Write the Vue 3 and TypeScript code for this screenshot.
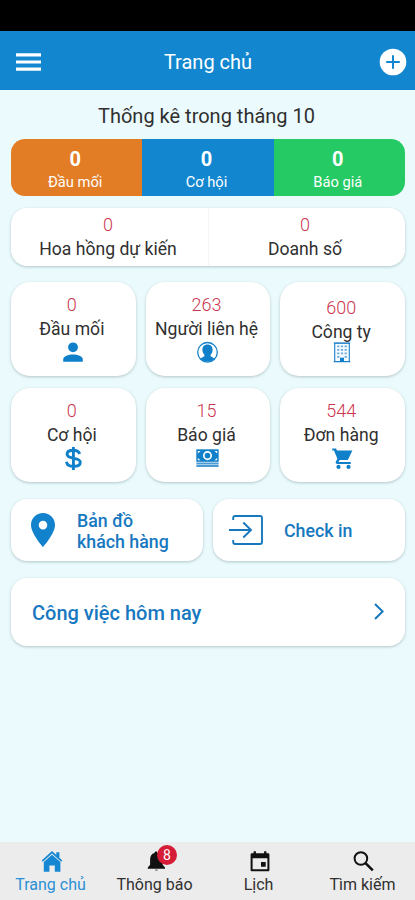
<script setup lang="ts">
interface Stat {
  value: number
  label: string
  icon?: string
  tone?: string
}

const summary: Stat[] = [
  { value: 0, label: 'Đầu mối', tone: 'orange' },
  { value: 0, label: 'Cơ hội', tone: 'blue' },
  { value: 0, label: 'Báo giá', tone: 'green' },
]

const revenue: Stat[] = [
  { value: 0, label: 'Hoa hồng dự kiến' },
  { value: 0, label: 'Doanh số' },
]

const tiles: Stat[] = [
  { value: 0, label: 'Đầu mối', icon: 'person' },
  { value: 263, label: 'Người liên hệ', icon: 'contact' },
  { value: 600, label: 'Công ty', icon: 'building' },
  { value: 0, label: 'Cơ hội', icon: 'dollar' },
  { value: 15, label: 'Báo giá', icon: 'cash' },
  { value: 544, label: 'Đơn hàng', icon: 'cart' },
]
</script>

<template>
  <div class="screen">
    <div class="status"></div>
    <header class="header">
      <svg class="menu" viewBox="0 0 25 18"><path d="M0 1.8h25M0 9h25M0 16.2h25" stroke="#fff" stroke-width="3.2" /></svg>
      <h1>Trang chủ</h1>
      <svg class="add" viewBox="0 0 28 28"><circle cx="14" cy="14" r="13.3" fill="#fff" /><path d="M14 7.2v13.6M7.2 14h13.6" stroke="#1287d0" stroke-width="2" /></svg>
    </header>

    <main>
      <h2><span>Thống kê trong tháng 10</span></h2>

      <section class="summary">
        <div v-for="s in summary" :key="s.label" :class="['sum', s.tone]">
          <b>{{ s.value }}</b>
          <span>{{ s.label }}</span>
        </div>
      </section>

      <section class="revenue card">
        <div v-for="s in revenue" :key="s.label" class="rev">
          <span class="num">{{ s.value }}</span>
          <span class="label">{{ s.label }}</span>
        </div>
      </section>

      <section class="tiles">
        <div v-for="t in tiles" :key="t.label" :class="['tile', 'card', t.icon]">
          <span class="num">{{ t.value }}</span>
          <span class="label">{{ t.label }}</span>
          <svg v-if="t.icon === 'person'" viewBox="0 0 24 24"><circle cx="13" cy="7.3" r="4.9" fill="#1180cb" /><path d="M3.2 21.7v-2.3c0-3.2 5.2-4.8 9.8-4.8s9.8 1.6 9.8 4.8v2.3z" fill="#1180cb" /></svg>
          <svg v-else-if="t.icon === 'contact'" viewBox="0 0 24 24"><circle cx="13.5" cy="12.3" r="9.8" fill="#fff" stroke="#1180cb" stroke-width="1.3" /><path d="M13.5 4.400c3.400 0 5.100 2.200 5.100 5.400 0 2.200-.8 3.900-2 5v1.500l4 2.200A9.700 9.700 0 0 1 6.400 18.500l4-2.200v-1.500c-1.200-1.100-2-2.800-2-5 0-3.200 1.700-5.400 5.100-5.400z" fill="#1180cb" /></svg>
          <svg v-else-if="t.icon === 'building'" viewBox="0 0 24 24"><path d="M5.700 3.200h14.600v18.300H5.700z" fill="#f6fbff" stroke="#1b7fca" stroke-width="1.100" /><path d="M4.700 3h16.600M4.700 21.700h16.600" stroke="#1b7fca" stroke-width="1.200" /><path d="M8.200 6.300h2.200m1.500 0h2.200m1.500 0h2.200M8.200 9.800h2.200m1.500 0h2.200m1.500 0h2.200M8.200 13.300h2.200m1.500 0h2.200m1.500 0h2.200M8.200 16.800h2.200m5.200 0h2.200" stroke="#6aabdd" stroke-width="1.700" /><path d="M11 21.500v-3.800h4v3.800z" fill="#1180cb" /></svg>
          <svg v-else-if="t.icon === 'dollar'" viewBox="0 0 24 24"><path d="M19.700 8c-.7-2.400-3-3.700-6.500-3.700-3.700 0-6.100 1.500-6.100 4 0 5.600 13.200 2.500 13.200 7.900 0 2.700-2.700 4.200-6.700 4.200-4.100 0-6.600-1.600-7.200-4.700M13.400.9V24" fill="none" stroke="#1180cb" stroke-width="2.900" /></svg>
          <svg v-else-if="t.icon === 'cash'" viewBox="0 0 24 24"><path d="M2.300 3.300h22.400v12.500H2.300z" fill="#1180cb" /><path d="M3.800 5v2.400L6.500 5zM3.800 14.300v-2.400l2.700 2.400zM23.200 5v2.400L20.500 5zM23.200 14.300v-2.400l-2.700 2.400z" fill="#fff" /><circle cx="13.500" cy="9.600" r="3.700" fill="#1180cb" stroke="#fff" stroke-width="1.700" /><path d="M2.400 17.500h22.200M2.400 20h22.200" stroke="#4b9ad3" stroke-width="1.800" /></svg>
          <svg v-else viewBox="0 0 24 24"><path d="M3.200 2.400h3.800l1 2.200h15.400l-4.200 8.600c-.3.600-.8.900-1.500.9h-7.100l-1.100 2h12.300v2H8.500c-1.600 0-2.300-1.300-1.600-2.600l1.500-2.700-3.400-8.400H3.200z" fill="#1180cb" /><circle cx="9.500" cy="20.900" r="2.100" fill="#1180cb" /><circle cx="19.500" cy="20.900" r="2.100" fill="#1180cb" /></svg>
        </div>
      </section>

      <section class="actions">
        <div class="action card map">
          <svg class="pin" viewBox="0 0 24 34"><path fill-rule="evenodd" d="M12 0C5.300 0 0 5.200 0 11.900 0 20.500 12 34 12 34s12-13.500 12-22.100C24 5.200 18.700 0 12 0zm0 7.800a4.300 4.300 0 1 1 0 8.600 4.300 4.300 0 0 1 0-8.600z" fill="#1282cc" /></svg>
          <span>Bản đồ<br />khách hàng</span>
        </div>
        <div class="action card check">
          <svg class="enter" viewBox="0 0 34 30"><path d="M4.200 5V3q0-2 2-2H31q2 0 2 2v24q0 2-2 2H6.200q-2 0-2-2v-2M0 15h22M14.300 7.500L22 15l-7.700 7.500" fill="none" stroke="#1778bd" stroke-width="1.900" /></svg>
          <span>Check in</span>
        </div>
      </section>

      <section class="today card">
        <span>Công việc hôm nay</span>
        <svg viewBox="0 0 10 17"><path d="M1 1l7.600 7.500L1 16" fill="none" stroke="#1778bd" stroke-width="2" /></svg>
      </section>
    </main>

    <nav class="tabs">
      <div class="tab active">
        <svg viewBox="0 0 24 24"><path d="M12 1.100l4.300 3.900V2.200h3.100v5.600l2.900 2.600-1.100 1.300L12 3.600l-9.200 8.100-1.100-1.300z" fill="#1687d2" /><path d="M12 4.700l8.400 7.300v9.800h-5.600v-6.400H9.400v6.400H3.800V12z" fill="#1687d2" /></svg>
        <span>Trang chủ</span>
      </div>
      <div class="tab bell">
        <svg viewBox="0 0 24 24"><path d="M12 1.500c.9 0 1.500.6 1.500 1.500 3.300.7 5.200 3.300 5.200 6.700v5l2.300 2.900v1.200H3.800v-1.200l2.300-2.900v-5c0-3.400 1.500-6 4.400-6.700 0-.9.600-1.500 1.500-1.500z" fill="#111" /><path d="M10.800 19.500h3.200a1.600 1.600 0 0 1-3.200 0z" fill="#888" /></svg>
        <i class="badge">8</i>
        <span>Thông báo</span>
      </div>
      <div class="tab calendar">
        <svg viewBox="0 0 24 24"><path d="M3.600 4.600h16.800v15.700H3.600z" fill="none" stroke="#111" stroke-width="2" stroke-linejoin="round" /><path d="M3 3.600h18v4.700H3zM5.600 1.300h2.300V5H5.600zM16.100 1.300h2.300V5h-2.300zM13 12h4.700v4.700H13z" fill="#111" /></svg>
        <span>Lịch</span>
      </div>
      <div class="tab search">
        <svg viewBox="0 0 24 24"><circle cx="8.900" cy="8.500" r="6.300" fill="none" stroke="#111" stroke-width="2" /><path d="M13.500 13.100l7.300 7.300" stroke="#111" stroke-width="2.600" /></svg>
        <span>Tìm kiếm</span>
      </div>
    </nav>
  </div>
</template>

<style>
body { background: #ebfbfd; }
</style>

<style scoped>
* { box-sizing: border-box; }
.screen { width: 415px; height: 900px; display: flex; flex-direction: column; background: #ebfbfd; font-family: Roboto, "Liberation Sans", sans-serif; color: #303030; overflow: hidden; }
svg { display: block; flex: none; }
span, b { white-space: nowrap; }
.status { height: 31px; background: #000; }
.header { height: 59px; background: #1287d0; display: flex; align-items: center; justify-content: space-between; padding: 3px 8px 0 16px; }
.menu { width: 25px; height: 18px; }
.add { width: 28px; height: 28px; }
h1 { margin: 0; font-size: 20px; line-height: 24px; font-weight: 400; color: #fff; padding-right: 4px; }
main { flex: 1; padding: 0 10px 0 11px; }
h2 { margin: 0; height: 49px; padding: 14px 3px 0 0; text-align: center; font-weight: 400; font-size: 20px; line-height: 24px; }
.summary { height: 57px; display: grid; grid-template-columns: repeat(3, 1fr); border-radius: 14px; overflow: hidden; color: #fff; }
.sum { display: flex; flex-direction: column; align-items: center; padding: 8px 3px 0 0; }
.sum b { font-size: 20px; line-height: 24px; }
.sum span { font-size: 14.7px; line-height: 22px; }
.orange { background: #e27d26; }
.blue { background: #1287d0; }
.green { background: #26ca64; }
.card { background: #fff; border-radius: 16px; box-shadow: 0 1px 3px rgba(60, 85, 90, 0.32); }
.num { color: #cc3650; font-weight: 300; font-size: 18px; line-height: 22px; }
.label { font-size: 17.6px; line-height: 24px; padding-top: 1px; margin-bottom: -1px; }
.revenue { margin-top: 12px; height: 58px; display: grid; grid-template-columns: 1fr 1fr; }
.rev { display: flex; flex-direction: column; align-items: center; padding: 6px 3px 0 0; }
.rev + .rev { border-left: 1px solid #f5f5f5; padding-right: 4px; }
.rev .label { line-height: 25px; }
.tiles { margin-top: 16px; display: grid; grid-template-columns: repeat(3, 1fr); gap: 12px 10px; }
.tile { height: 94px; border-radius: 19px; display: flex; flex-direction: column; align-items: center; padding: 12px 3px 0 0; }
.tile svg { width: 24px; height: 24px; overflow: visible; }
.building { padding-top: 15px; }
.building svg { margin-top: -3px; }
.actions { margin-top: 17px; display: grid; grid-template-columns: 1fr 1fr; gap: 10px; height: 62px; }
.action { display: flex; align-items: center; color: #1778c0; font-size: 17.8px; font-weight: 500; line-height: 21px; padding-top: 1px; }
.pin { width: 24px; height: 34px; margin: -1px 22px 0 20px; }
.enter { width: 34px; height: 30px; margin: -1px 21px 0 16px; }
.today { margin-top: 17px; height: 68px; display: flex; align-items: center; justify-content: space-between; padding: 2px 21px 0 21px; color: #1778c0; font-size: 20px; font-weight: 500; }
.today svg { width: 10px; height: 17px; margin-top: -4px; }
.tabs { height: 58px; background: #ececec; display: grid; grid-template-columns: repeat(4, 104px); }
.tab { position: relative; display: flex; flex-direction: column; align-items: center; padding-top: 8px; font-size: 16px; line-height: 21px; }
.tab svg { width: 24px; height: 24px; }
.tab span { padding-right: 3px; }
.active span { color: #2b90d7; }
.badge { position: absolute; left: 53px; top: 3px; width: 20px; height: 20px; border-radius: 50%; background: #d61d37; color: #fff; font-style: normal; font-size: 14px; line-height: 21px; text-align: center; }
</style>
